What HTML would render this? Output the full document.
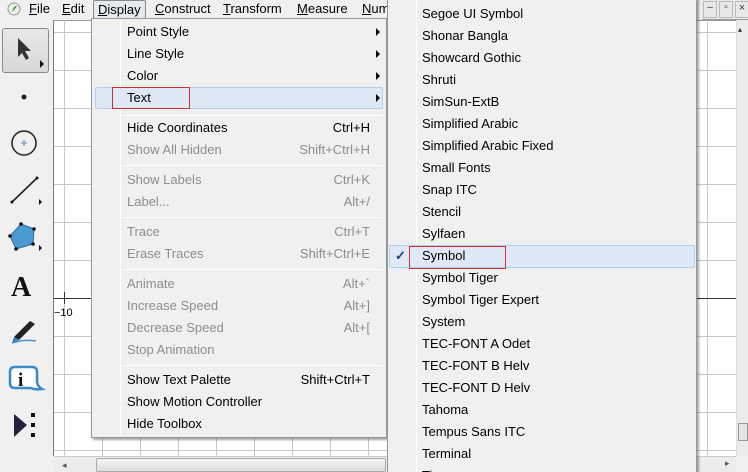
<!DOCTYPE html>
<html><head><meta charset="utf-8"><style>
*{margin:0;padding:0;box-sizing:border-box}
html,body{width:748px;height:472px;overflow:hidden}
body{background:#f0f0f0;font-family:"Liberation Sans",sans-serif;font-size:13px;color:#000;position:relative}
.a{position:absolute}
.mb span{position:absolute;top:1px}
.mi{position:absolute;left:35px;white-space:nowrap}
.sc{position:absolute;right:16px;white-space:nowrap}
.dis{color:#8d8d8d}
.sep{position:absolute;left:30px;right:4px;height:1px;background:#d7d7d7;border-bottom:1px solid #fff}
.arr{position:absolute;right:6px;width:0;height:0;border-left:4px solid #000;border-top:4px solid transparent;border-bottom:4px solid transparent}
.si{position:absolute;left:34px;white-space:nowrap}
</style></head><body>
<div class="a" style="left:53px;top:20px;width:683px;height:436px;background:#fff;border-left:1px solid #777;border-top:1px solid #999"></div>
<svg class="a" style="left:0;top:0" width="748" height="472">
<g stroke="#c8c8c8" stroke-width="1">
<line x1="64.5" y1="20" x2="64.5" y2="456"/><line x1="102.5" y1="20" x2="102.5" y2="456"/><line x1="140.5" y1="20" x2="140.5" y2="456"/><line x1="178.5" y1="20" x2="178.5" y2="456"/><line x1="216.5" y1="20" x2="216.5" y2="456"/><line x1="254.5" y1="20" x2="254.5" y2="456"/><line x1="292.5" y1="20" x2="292.5" y2="456"/><line x1="330.5" y1="20" x2="330.5" y2="456"/><line x1="368.5" y1="20" x2="368.5" y2="456"/><line x1="707.5" y1="20" x2="707.5" y2="456"/>
<line x1="54" y1="32.5" x2="736" y2="32.5"/><line x1="54" y1="70.5" x2="736" y2="70.5"/><line x1="54" y1="108.5" x2="736" y2="108.5"/><line x1="54" y1="146.5" x2="736" y2="146.5"/><line x1="54" y1="184.5" x2="736" y2="184.5"/><line x1="54" y1="222.5" x2="736" y2="222.5"/><line x1="54" y1="260.5" x2="736" y2="260.5"/><line x1="54" y1="336.5" x2="736" y2="336.5"/><line x1="54" y1="374.5" x2="736" y2="374.5"/><line x1="54" y1="412.5" x2="736" y2="412.5"/><line x1="54" y1="450.5" x2="736" y2="450.5"/>
</g>
<line x1="54" y1="298.5" x2="736" y2="298.5" stroke="#333"/>
<line x1="64.5" y1="292" x2="64.5" y2="304" stroke="#333"/>
<text x="54" y="316" font-size="11" font-family="Liberation Sans">−10</text>
</svg>
<div class="a" style="left:54px;top:456px;width:682px;height:16px;background:#ececec;border-top:1px solid #ccc"></div>
<div class="a" style="left:96px;top:458px;width:290px;height:14px;background:linear-gradient(#f6f6f6,#dcdcdc);border:1px solid #aaa;border-radius:2px"></div>
<div class="a" style="left:62px;top:460px;font-size:9px;color:#555">◂</div>
<div class="a" style="left:725px;top:458px;font-size:9px;color:#555">▸</div>
<div class="a" style="left:736px;top:20px;width:12px;height:436px;background:#ececec;border-left:1px solid #ddd"></div>
<div class="a" style="left:738px;top:423px;width:10px;height:18px;background:#e4e4e4;border:1px solid #999"></div>
<div class="a" style="left:738px;top:25px;font-size:8px;color:#333">▴</div>
<div class="a" style="left:702px;top:0;width:46px;height:20px;background:#e8e8e8;border-bottom:1px solid #999"></div>
<div class="a" style="left:703px;top:1px;width:14px;height:17px;border:1px solid #bbb;font-size:10px;text-align:center;color:#333">–</div>
<div class="a" style="left:719px;top:1px;width:14px;height:17px;border:1px solid #bbb;font-size:10px;text-align:center;color:#333">▫</div>
<div class="a" style="left:735px;top:1px;width:14px;height:17px;border:1px solid #bbb;font-size:11px;text-align:center;color:#333">×</div>
<div class="a mb" style="left:0;top:0;width:402px;height:19px;background:#f0f0f0">
<svg class="a" style="left:7px;top:2px" width="14" height="14"><circle cx="7" cy="7" r="6" fill="#eaf2e0" stroke="#999"/><path d="M5 10 Q7 3 10 4 Q8 7 5 10Z" fill="#3a8a3a"/></svg>
<span style="left:29px"><u>F</u>ile</span>
<span style="left:62px"><u>E</u>dit</span>
<span style="left:93px;top:0;width:53px;height:19px;border:1px solid #888;border-radius:2px;background:#e5eaf0;padding:1px 0 0 4px"><u>D</u>isplay</span>
<span style="left:155px"><u>C</u>onstruct</span>
<span style="left:223px"><u>T</u>ransform</span>
<span style="left:297px"><u>M</u>easure</span>
<span style="left:362px"><u>N</u>um</span>
</div>
<div class="a" style="left:2px;top:28px;width:47px;height:45px;border:1px solid #888;border-radius:3px;background:linear-gradient(#e8e8e8,#d8d8d8)"></div>
<svg class="a" style="left:0;top:0" width="53" height="456">
<path d="M18 38 L18 57 L22 53 L26 60 L29 58 L25 51 L31 51 Z" fill="#333"/>
<path d="M40 60 L44 64 L40 68Z" fill="#111"/>
<circle cx="24" cy="97" r="2.5" fill="#222"/>
<circle cx="24" cy="143" r="12" fill="none" stroke="#222" stroke-width="1.5"/>
<path d="M21 143h6M24 140v6" stroke="#49a" stroke-width="1"/>
<line x1="12" y1="202" x2="37" y2="178" stroke="#222" stroke-width="1.6"/><circle cx="12" cy="202" r="1.5" fill="#111"/><circle cx="37" cy="178" r="1.5" fill="#111"/>
<path d="M39 199 L42 202 L39 205Z" fill="#111"/>
<path d="M21 224 L34 229 L33 244 L16 249 L10 236 Z" fill="#4a9ad0" stroke="#2b6e9e"/>
<g fill="#111"><circle cx="21" cy="224" r="1.8"/><circle cx="34" cy="229" r="1.8"/><circle cx="33" cy="244" r="1.8"/><circle cx="16" cy="249" r="1.8"/><circle cx="10" cy="236" r="1.8"/></g>
<path d="M39 245 L42 248 L39 251Z" fill="#111"/>
<text x="11" y="296" font-family="Liberation Serif" font-weight="bold" font-size="28" fill="#111">A</text>
<path d="M14 337 L30 321 L35 324 L19 340 Z" fill="#222"/><path d="M12 343 L14 337 L19 340Z" fill="#3a7ac0"/><path d="M12 343 Q24 339 36 341" stroke="#4a90d0" stroke-width="1.5" fill="none"/>
<path d="M15 367 L32 367 Q37 367 37 372 L37 382 Q38 387 42 389 Q35 390 31 388 L15 388 Q10 388 10 383 L10 372 Q10 367 15 367Z" fill="#fff" stroke="#3a8ac8" stroke-width="2.5"/>
<text x="18" y="386" font-family="Liberation Serif" font-weight="bold" font-size="19" fill="#111">i</text>
<path d="M14 414 L14 437 L27 425Z" fill="#22223a"/>
<rect x="31" y="413" width="4" height="4" fill="#111"/><rect x="31" y="423" width="4" height="4" fill="#111"/><rect x="31" y="433" width="4" height="4" fill="#111"/>
</svg>
<div class="a" style="left:91px;top:18px;width:296px;height:420px;background:#f0f0f0;border:1px solid #979797;box-shadow:2px 2px 2px rgba(0,0,0,.35)">
<div class="a" style="left:28px;top:2px;width:1px;height:414px;background:#e2e3e3;border-right:1px solid #fff"></div>
<div class="a" style="left:3px;top:68px;width:288px;height:22px;background:#dfe9f5;border:1px solid #aecff0;border-radius:2px"></div>
<div class="a" style="left:20px;top:68px;width:78px;height:22px;border:1px solid #d03030"></div>
<div class="mi" style="top:5px">Point Style</div><div class="arr" style="top:9px"></div>
<div class="mi" style="top:27px">Line Style</div><div class="arr" style="top:31px"></div>
<div class="mi" style="top:49px">Color</div><div class="arr" style="top:53px"></div>
<div class="mi" style="top:71px">Text</div><div class="arr" style="top:75px"></div>
<div class="sep" style="top:96px"></div>
<div class="mi" style="top:101px">Hide Coordinates</div><div class="sc" style="top:101px">Ctrl+H</div>
<div class="mi dis" style="top:123px">Show All Hidden</div><div class="sc dis" style="top:123px">Shift+Ctrl+H</div>
<div class="sep" style="top:146px"></div>
<div class="mi dis" style="top:153px">Show Labels</div><div class="sc dis" style="top:153px">Ctrl+K</div>
<div class="mi dis" style="top:175px">Label...</div><div class="sc dis" style="top:175px">Alt+/</div>
<div class="sep" style="top:198px"></div>
<div class="mi dis" style="top:205px">Trace</div><div class="sc dis" style="top:205px">Ctrl+T</div>
<div class="mi dis" style="top:227px">Erase Traces</div><div class="sc dis" style="top:227px">Shift+Ctrl+E</div>
<div class="sep" style="top:250px"></div>
<div class="mi dis" style="top:257px">Animate</div><div class="sc dis" style="top:257px">Alt+`</div>
<div class="mi dis" style="top:279px">Increase Speed</div><div class="sc dis" style="top:279px">Alt+]</div>
<div class="mi dis" style="top:301px">Decrease Speed</div><div class="sc dis" style="top:301px">Alt+[</div>
<div class="mi dis" style="top:323px">Stop Animation</div>
<div class="sep" style="top:346px"></div>
<div class="mi" style="top:353px">Show Text Palette</div><div class="sc" style="top:353px">Shift+Ctrl+T</div>
<div class="mi" style="top:375px">Show Motion Controller</div>
<div class="mi" style="top:397px">Hide Toolbox</div>
</div>
<div class="a" style="left:387px;top:-2px;width:310px;height:476px;background:#f0f0f0;border:1px solid #979797;border-bottom:none;box-shadow:2px 0 2px rgba(0,0,0,.35);overflow:hidden">
<div class="a" style="left:28px;top:0;width:1px;height:480px;background:#e2e3e3;border-right:1px solid #fff"></div>
<div class="a" style="left:1px;top:246px;width:306px;height:23px;background:#dfe9f5;border:1px solid #aecff0;border-radius:2px"></div>
<div class="a" style="left:21px;top:247px;width:97px;height:23px;border:1px solid #d03030"></div>
<div class="a" style="left:7px;top:249px;color:#1a3c8a;font-size:13px;font-weight:bold">✓</div>
<div class="si" style="top:7px">Segoe UI Symbol</div>
<div class="si" style="top:29px">Shonar Bangla</div>
<div class="si" style="top:51px">Showcard Gothic</div>
<div class="si" style="top:73px">Shruti</div>
<div class="si" style="top:95px">SimSun-ExtB</div>
<div class="si" style="top:117px">Simplified Arabic</div>
<div class="si" style="top:139px">Simplified Arabic Fixed</div>
<div class="si" style="top:161px">Small Fonts</div>
<div class="si" style="top:183px">Snap ITC</div>
<div class="si" style="top:205px">Stencil</div>
<div class="si" style="top:227px">Sylfaen</div>
<div class="si" style="top:249px">Symbol</div>
<div class="si" style="top:271px">Symbol Tiger</div>
<div class="si" style="top:293px">Symbol Tiger Expert</div>
<div class="si" style="top:315px">System</div>
<div class="si" style="top:337px">TEC-FONT A Odet</div>
<div class="si" style="top:359px">TEC-FONT B Helv</div>
<div class="si" style="top:381px">TEC-FONT D Helv</div>
<div class="si" style="top:403px">Tahoma</div>
<div class="si" style="top:425px">Tempus Sans ITC</div>
<div class="si" style="top:447px">Terminal</div>
<div class="si" style="top:469px">Times</div>
</div>
</body></html>
